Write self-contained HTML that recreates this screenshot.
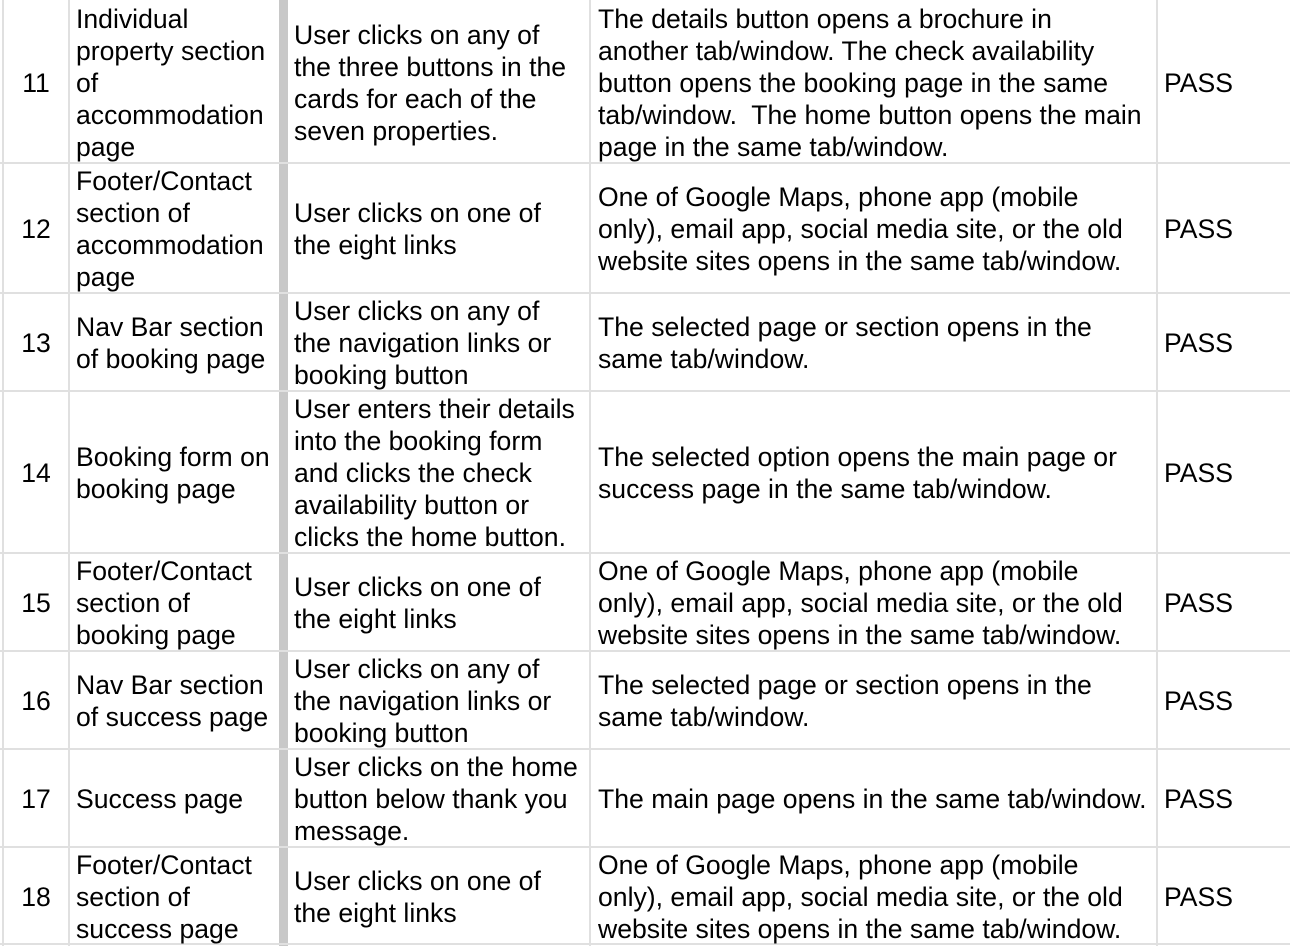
<!DOCTYPE html>
<html><head><meta charset="utf-8"><style>
html,body{margin:0;padding:0;background:#fff;}
body{width:1290px;height:946px;position:relative;overflow:hidden;font-family:"Liberation Sans",Arial,sans-serif;font-size:26.6px;line-height:32px;color:#000;}
.hl{position:absolute;left:0;width:1290px;height:2px;background:#e0e0e0;}
.vl{position:absolute;top:0;height:946px;width:2px;background:#e0e0e0;}
.bar{position:absolute;top:0;height:946px;left:279px;width:9px;background:#c8c8c8;}
.r{position:absolute;left:0;width:1290px;}
.c{position:absolute;top:1px;height:100%;display:flex;align-items:center;white-space:nowrap;}
.n{left:3px;width:66px;justify-content:center;}
.a{left:76px;}.b{left:294px;}.d{left:598px;}.e{left:1164px;}
</style></head><body>
<div class="vl" style="left:2px"></div>
<div class="vl" style="left:68px"></div>
<div class="vl" style="left:589px"></div>
<div class="vl" style="left:1156px"></div>
<div class="bar"></div>
<div class="hl" style="top:162px"></div>
<div class="hl" style="top:292px"></div>
<div class="hl" style="top:390px"></div>
<div class="hl" style="top:552px"></div>
<div class="hl" style="top:650px"></div>
<div class="hl" style="top:748px"></div>
<div class="hl" style="top:846px"></div>
<div class="hl" style="top:943px"></div>

<div class="r" style="top:0;height:163px">
<div class="c n">11</div>
<div class="c a">Individual<br>property section<br>of<br>accommodation<br>page</div>
<div class="c b">User clicks on any of<br>the three buttons in the<br>cards for each of the<br>seven properties.</div>
<div class="c d">The details button opens a brochure in<br>another tab/window. The check availability<br>button opens the booking page in the same<br>tab/window.&nbsp; The home button opens the main<br>page in the same tab/window.</div>
<div class="c e">PASS</div>
</div>

<div class="r" style="top:164px;height:128px">
<div class="c n">12</div>
<div class="c a">Footer/Contact<br>section of<br>accommodation<br>page</div>
<div class="c b">User clicks on one of<br>the eight links</div>
<div class="c d">One of Google Maps, phone app (mobile<br>only), email app, social media site, or the old<br>website sites opens in the same tab/window.</div>
<div class="c e">PASS</div>
</div>

<div class="r" style="top:294px;height:96px">
<div class="c n">13</div>
<div class="c a">Nav Bar section<br>of booking page</div>
<div class="c b">User clicks on any of<br>the navigation links or<br>booking button</div>
<div class="c d">The selected page or section opens in the<br>same tab/window.</div>
<div class="c e">PASS</div>
</div>

<div class="r" style="top:392px;height:160px">
<div class="c n">14</div>
<div class="c a">Booking form on<br>booking page</div>
<div class="c b">User enters their details<br>into the booking form<br>and clicks the check<br>availability button or<br>clicks the home button.</div>
<div class="c d">The selected option opens the main page or<br>success page in the same tab/window.</div>
<div class="c e">PASS</div>
</div>

<div class="r" style="top:554px;height:96px">
<div class="c n">15</div>
<div class="c a">Footer/Contact<br>section of<br>booking page</div>
<div class="c b">User clicks on one of<br>the eight links</div>
<div class="c d">One of Google Maps, phone app (mobile<br>only), email app, social media site, or the old<br>website sites opens in the same tab/window.</div>
<div class="c e">PASS</div>
</div>

<div class="r" style="top:652px;height:96px">
<div class="c n">16</div>
<div class="c a">Nav Bar section<br>of success page</div>
<div class="c b">User clicks on any of<br>the navigation links or<br>booking button</div>
<div class="c d">The selected page or section opens in the<br>same tab/window.</div>
<div class="c e">PASS</div>
</div>

<div class="r" style="top:750px;height:96px">
<div class="c n">17</div>
<div class="c a">Success page</div>
<div class="c b">User clicks on the home<br>button below thank you<br>message.</div>
<div class="c d">The main page opens in the same tab/window.</div>
<div class="c e">PASS</div>
</div>

<div class="r" style="top:848px;height:95px">
<div class="c n">18</div>
<div class="c a">Footer/Contact<br>section of<br>success page</div>
<div class="c b">User clicks on one of<br>the eight links</div>
<div class="c d">One of Google Maps, phone app (mobile<br>only), email app, social media site, or the old<br>website sites opens in the same tab/window.</div>
<div class="c e">PASS</div>
</div>
</body></html>
